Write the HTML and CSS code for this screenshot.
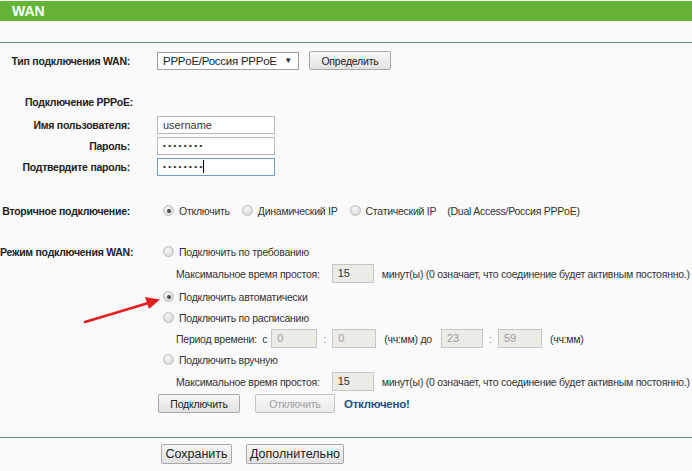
FILE: index.html
```html
<!DOCTYPE html>
<html lang="ru">
<head>
<meta charset="utf-8">
<title>WAN</title>
<link rel="stylesheet" href="styles.css">
</head>
<body>
<div class="page">
  <div class="title">WAN</div>
  <div class="rule top-rule"></div>

  <div class="form">
    <div class="row r-type">
      <div class="label">Тип подключения WAN:</div>
      <div class="value">
        <div class="select"><span>PPPoE/Россия PPPoE</span><span class="caret">▼</span></div>
        <button class="btn btn-detect">Определить</button>
      </div>
    </div>

    <div class="row r-section">
      <div class="section">Подключение PPPoE:</div>
    </div>

    <div class="row r-field r-first">
      <div class="label">Имя пользователя:</div>
      <div class="value"><div class="input">username</div></div>
    </div>
    <div class="row r-field">
      <div class="label">Пароль:</div>
      <div class="value"><div class="input dots">••••••••</div></div>
    </div>
    <div class="row r-field">
      <div class="label">Подтвердите пароль:</div>
      <div class="value"><div class="input dots focus">••••••••<span class="cursor"></span></div></div>
    </div>

    <div class="row r-secondary">
      <div class="label">Вторичное подключение:</div>
      <div class="value options">
        <span class="opt"><span class="radio checked"></span>Отключить</span>
        <span class="opt"><span class="radio"></span>Динамический IP</span>
        <span class="opt"><span class="radio"></span>Статический IP</span>
        <span class="note">(Dual Access/Россия PPPoE)</span>
      </div>
    </div>

    <div class="row r-mode">
      <div class="label">Режим подключения WAN:</div>
      <div class="value"><span class="opt"><span class="radio"></span>Подключить по требованию</span></div>
    </div>
    <div class="row r-idle">
      <div class="label"></div>
      <div class="value sub">
        <span class="sublabel">Максимальное время простоя:</span>
        <div class="input small ro">15</div>
        <span class="after">минут(ы) (0 означает, что соединение будет активным постоянно.)</span>
      </div>
    </div>
    <div class="row r-opt r-auto">
      <div class="label"></div>
      <div class="value"><span class="opt"><span class="radio checked"></span>Подключить автоматически</span></div>
    </div>
    <div class="row r-opt">
      <div class="label"></div>
      <div class="value"><span class="opt"><span class="radio"></span>Подключить по расписанию</span></div>
    </div>
    <div class="row r-opt">
      <div class="label"></div>
      <div class="value sub period">
        <span class="plabel">Период времени:&nbsp; с</span>
        <div class="input ro dis w44">0</div>
        <span class="colon">:</span>
        <div class="input ro dis w42">0</div>
        <span class="hm">(чч:мм) до</span>
        <div class="input ro dis w40">23</div>
        <span class="colon">:</span>
        <div class="input ro dis w42">59</div>
        <span class="hm">(чч:мм)</span>
      </div>
    </div>
    <div class="row r-opt">
      <div class="label"></div>
      <div class="value"><span class="opt"><span class="radio"></span>Подключить вручную</span></div>
    </div>
    <div class="row r-opt r-idle2">
      <div class="label"></div>
      <div class="value sub">
        <span class="sublabel">Максимальное время простоя:</span>
        <div class="input small ro">15</div>
        <span class="after">минут(ы) (0 означает, что соединение будет активным постоянно.)</span>
      </div>
    </div>
    <div class="row r-opt r-buttons">
      <div class="label"></div>
      <div class="value">
        <button class="btn btn-connect">Подключить</button>
        <button class="btn btn-disconnect" disabled>Отключить</button>
        <span class="status">Отключено!</span>
      </div>
    </div>
  </div>

  <div class="rule bottom-rule"></div>
  <div class="footer">
    <button class="btn big btn-save">Сохранить</button>
    <button class="btn big btn-more">Дополнительно</button>
  </div>

  <svg class="arrow" width="692" height="471" viewBox="0 0 692 471">
    <line x1="85" y1="322" x2="150" y2="302.5" stroke="#e41e1e" stroke-width="2.6" stroke-linecap="round"/>
    <polygon points="160,299.5 145,297 149,309" fill="#e41e1e"/>
  </svg>
</div>
</body>
</html>
```

FILE: styles.css
```css
html, body {
  margin: 0;
  padding: 0;
  background: #fafafa;
}

.page {
  position: relative;
  width: 692px;
  height: 471px;
  overflow: hidden;
  font-family: "Liberation Sans", Arial, sans-serif;
  font-size: 10.5px;
  letter-spacing: -0.25px;
  color: #333;
}

.title {
  margin-top: 1px;
  height: 20px;
  line-height: 20px;
  background: #65b436;
  color: #fff;
  font-weight: bold;
  font-size: 14px;
  letter-spacing: 0;
  padding-left: 12px;
}

.rule {
  height: 1px;
  background: #5e8878;
}

.top-rule {
  margin-top: 21px;
}

.form {
  display: flex;
  flex-direction: column;
}

.row {
  display: flex;
  align-items: center;
  height: 21px;
  white-space: nowrap;
}

.label {
  width: 130px;
  flex: none;
  text-align: right;
  font-weight: bold;
  color: #222;
  margin-right: 27px;
  white-space: nowrap;
}

.value {
  display: flex;
  align-items: center;
  white-space: nowrap;
}

.r-type { margin-top: 7px; }
.r-section { margin-top: 20px; }
.section {
  padding-left: 25px;
  font-weight: bold;
  color: #222;
}
.r-first { margin-top: 2px; }

.r-secondary { margin-top: 23px; }
.r-mode { margin-top: 21px; height: 19px; }
.r-idle { height: 25px; }

.select {
  height: 16px;
  border: 1px solid #a0a0a0;
  background: #fff;
  display: flex;
  align-items: center;
  justify-content: space-between;
  padding: 0 6px 0 5px;
  box-sizing: content-box;
  width: 129px;
  font-size: 11.5px;
  color: #222;
}
.caret {
  font-size: 8px;
  color: #222;
}

.btn {
  font-family: "Liberation Sans", Arial, sans-serif;
  font-size: 10.5px;
  letter-spacing: -0.2px;
  color: #222;
  height: 19px;
  padding: 0;
  border: 1px solid #a8a8a8;
  border-radius: 2px;
  background: linear-gradient(#f7f7f7, #e2e2e2);
  box-sizing: border-box;
}
.btn-detect { width: 82px; margin-left: 10px; }
.btn-connect { width: 82px; margin-left: 1px; }
.btn-disconnect {
  width: 80px;
  margin-left: 15px;
  color: #a0a0a0;
  border-color: #c4c4c4;
  background: linear-gradient(#f7f7f7, #ebebeb);
}
.status {
  margin-left: 9px;
  font-weight: bold;
  font-size: 11.5px;
  color: #1d4f8b;
}

.input {
  width: 111px;
  height: 16px;
  line-height: 16px;
  border: 1px solid #b9b9b9;
  background: #fff;
  padding-left: 5px;
  font-size: 11px;
  letter-spacing: 0;
  color: #333;
  box-sizing: content-box;
}
.dots {
  font-size: 8px;
  letter-spacing: 2.4px;
  display: flex;
  align-items: center;
  color: #222;
}
.focus {
  border-color: #6e9dd0;
}
.cursor {
  display: inline-block;
  width: 1px;
  height: 13px;
  background: #000;
  margin-left: -2px;
}

.options .opt { margin-right: 12px; }
.options .note { margin-left: -1px; }

.opt {
  display: inline-flex;
  align-items: center;
}

.radio {
  width: 9px;
  height: 9px;
  border: 1px solid #bdbdbd;
  border-radius: 50%;
  background: radial-gradient(circle at 40% 35%, #f8f8f8, #cfcfcf);
  margin-left: 6px;
  margin-right: 5px;
  display: inline-flex;
  align-items: center;
  justify-content: center;
  flex: none;
}
.options .opt + .opt .radio { margin-left: 0; }
.radio.checked::after {
  content: "";
  width: 4px;
  height: 4px;
  border-radius: 50%;
  background: #4a4a4a;
}

.sub { padding-left: 19px; }
.sublabel { margin-right: 12px; }
.small { width: 35px; }
.ro {
  background: #ecebe6;
  border-color: #c6c6c6;
  height: 17px;
  line-height: 17px;
}
.dis { color: #a0a0a0; }
.after { margin-left: 8px; }

.period .plabel { margin-right: 4px; }
.w44 { width: 39px; }
.w42 { width: 37px; }
.w40 { width: 35px; }
.colon { width: 15px; text-align: center; color: #888; }
.hm { margin: 0 9px 0 8px; }

.r-idle2 { margin-top: 1px; }
.r-buttons { margin-top: 1px; }

.bottom-rule { margin-top: 23px; }

.footer {
  display: flex;
  align-items: center;
  margin-top: 6px;
  padding-left: 161px;
  gap: 14px;
}
.big {
  font-size: 12.5px;
  letter-spacing: 0;
  height: 20px;
}
.btn-save { width: 71px; }
.btn-more { width: 98px; }

.arrow {
  position: absolute;
  left: 0;
  top: 0;
  pointer-events: none;
}
```
